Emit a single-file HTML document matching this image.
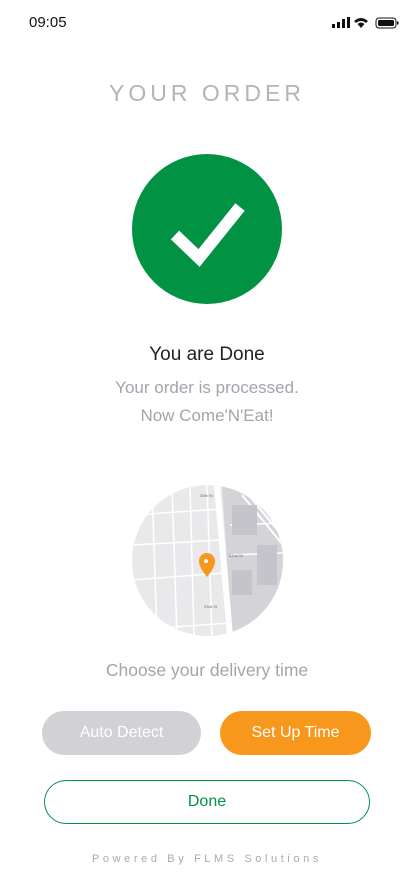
<!DOCTYPE html>
<html><head><meta charset="utf-8"><style>
*{margin:0;padding:0;box-sizing:border-box}
body{width:414px;height:896px;background:#fff;font-family:"Liberation Sans",sans-serif;position:relative;overflow:hidden}
.abs{position:absolute}
.c{left:0;right:0;text-align:center}
.btn{position:absolute;height:44px;border-radius:22px;font-size:16px;display:flex;align-items:center;justify-content:center}
</style></head><body>
<div class="abs" style="left:29px;top:14px;font-size:15px;color:#111">09:05</div>
<svg class="abs" style="left:332px;top:16px" width="68" height="14" viewBox="0 0 68 14">
<rect x="0" y="8" width="3" height="4" fill="#111"/><rect x="5" y="6" width="3" height="6" fill="#111"/><rect x="10" y="3" width="3" height="9" fill="#111"/><rect x="15" y="1" width="3" height="11" fill="#111"/>
<path d="M22 5 Q29 -1 36 5 L34 7 Q29 3 24 7 Z M25.5 8 Q29 5 32.5 8 L29 12 Z" fill="#111"/>
<rect x="44" y="2" width="20" height="10" rx="3" fill="none" stroke="#111" stroke-width="1"/><rect x="46" y="4" width="16" height="6" rx="1.5" fill="#111"/><rect x="65" y="5.5" width="1.5" height="3" fill="#111"/>
</svg>
<div class="abs c" style="top:80px;font-size:23px;letter-spacing:4px;color:#b4b4b4;font-weight:100">YOUR ORDER</div>
<svg class="abs" style="left:132px;top:154px" width="150" height="150" viewBox="0 0 150 150">
<circle cx="75" cy="75" r="75" fill="#029244"/>
<path d="M43 81 L67 104 L108 53" fill="none" stroke="#fff" stroke-width="12"/>
</svg>
<div class="abs c" style="top:344px;font-size:19px;color:#222">You are Done</div>
<div class="abs c" style="top:378px;font-size:17px;color:#a5a3ad">Your order is processed.</div>
<div class="abs c" style="top:406px;font-size:17px;color:#a5a3ad">Now Come'N'Eat!</div>
<svg class="abs" style="left:132px;top:485px" width="151" height="151" viewBox="0 0 151 151">
<defs><clipPath id="cp"><circle cx="75.5" cy="75.5" r="75.5"/></clipPath></defs>
<g clip-path="url(#cp)">
<rect width="151" height="151" fill="#e9e9ec"/>
<path d="M90 0 L151 0 L151 151 L100 151 Z" fill="#d3d3d8"/>
<path d="M85 0 L98 151" stroke="#fff" stroke-width="6"/>
<path d="M110 10 L151 60 M115 8 L151 52" stroke="#fff" stroke-width="2"/>
<g stroke="#fff" stroke-width="1.5" fill="none">
<path d="M0 30 L90 24 M0 95 L92 88 M0 145 L98 138 M0 60 L90 55"/>
<path d="M20 0 L25 151 M40 0 L45 151 M58 0 L62 151 M75 0 L80 151"/>
<path d="M98 70 L151 68 M98 40 L151 38"/>
</g>
<g fill="#c4c4ca"><rect x="100" y="20" width="25" height="30"/><rect x="125" y="60" width="20" height="40"/><rect x="100" y="85" width="20" height="25"/></g>
<g font-size="4" fill="#666" font-family="Liberation Sans,sans-serif"><text x="68" y="12">30th St</text><text x="97" y="72">22nd St</text><text x="72" y="123">23rd St</text></g>
<path d="M75 92 C67 82 67 78 67 76 A8 8 0 0 1 83 76 C83 78 83 82 75 92 Z" fill="#f7981d"/>
<circle cx="74" cy="76" r="2" fill="#fff"/>
</g></svg>
<div class="abs c" style="top:660px;font-size:17.5px;color:#a5a3ad">Choose your delivery time</div>
<div class="btn" style="left:42px;top:711px;width:159px;background:#d2d2d6;color:#fff">Auto Detect</div>
<div class="btn" style="left:220px;top:711px;width:151px;background:#f7981d;color:#fff">Set Up Time</div>
<div class="btn" style="left:44px;top:780px;width:326px;border:1px solid #029244;color:#029244">Done</div>
<div class="abs c" style="top:853px;font-size:11px;letter-spacing:3.6px;color:#aaa">Powered By FLMS Solutions</div>
</body></html>
